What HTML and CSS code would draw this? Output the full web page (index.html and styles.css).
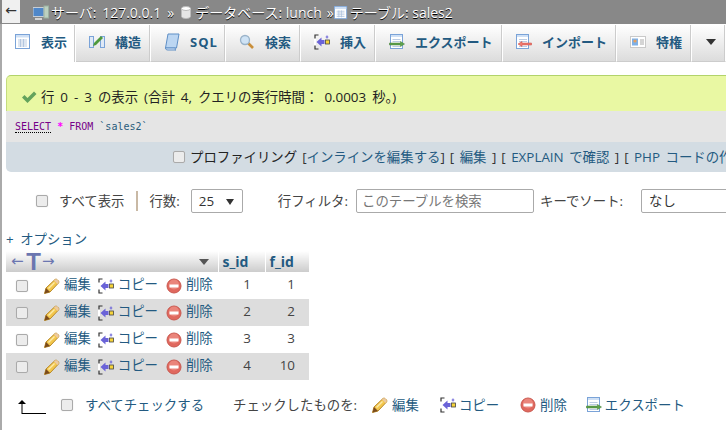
FILE: index.html
```html
<!DOCTYPE html>
<html lang="ja">
<head>
<meta charset="utf-8">
<title>sales2</title>
<link rel="stylesheet" href="styles.css">
</head>
<body>
<svg class="defs" width="0" height="0" aria-hidden="true">
  <symbol id="i-pencil" viewBox="0 0 16 16">
    <path d="M11 1.500a1.500 1.500 0 0 1 2 0l1.500 1.500a1.500 1.500 0 0 1 0 2L6 14l-5.500 1.500L2 10z" fill="#f3c74c" stroke="#b98a2a" stroke-width="1"/>
    <path d="M11 1.500a1.500 1.500 0 0 1 2 0l1.500 1.500a1.500 1.500 0 0 1 0 2l-1 1-3.500-3.500z" fill="#ecc9a0"/>
    <path d="M2 10l4 4-5.500 1.500z" fill="#7a4a1c"/>
    <path d="M4.500 10.500L10.500 4.500" stroke="#fbeaa8" stroke-width="1.400"/>
  </symbol>
  <symbol id="i-copy" viewBox="0 0 16 16">
    <path d="M4.500 1H1v14h3.500" fill="none" stroke="#333" stroke-width="1.200"/>
    <path d="M1 4.500v7" stroke="#fff" stroke-width="2"/>
    <path d="M2.500 8l5-4.500v2.500h3v4h-3v2.500z" fill="#6a63d8"/>
    <rect x="11.500" y="6" width="4" height="4" fill="#f5d33a" stroke="#444" stroke-width=".8"/>
    <path d="M13 1.500v3M11.700 3h2.600" stroke="#6a63d8" stroke-width="1"/>
  </symbol>
  <symbol id="i-del" viewBox="0 0 16 16">
    <circle cx="8" cy="8" r="7" fill="#e0685e" stroke="#c9584f"/>
    <circle cx="8" cy="6.500" r="5" fill="#f09a90" opacity=".6"/>
    <rect x="3.500" y="6.500" width="9" height="3" fill="#fff"/>
  </symbol>
  <symbol id="i-table" viewBox="0 0 16 16">
    <rect x=".5" y=".5" width="14" height="14" fill="#fff" stroke="#7aa3d8"/>
    <path d="M1 1h13v2.500H1z" fill="#cfe0f5"/>
    <path d="M3 6h9M3 8h9M3 10h9M3 12h9M5.500 5v8M8.500 5v8" stroke="#a9bfdc" stroke-width=".8"/>
  </symbol>
  <symbol id="i-export" viewBox="0 0 16 16">
    <rect x="1.500" y=".5" width="12" height="14" fill="#fff" stroke="#7aa3d8"/>
    <path d="M2 1h11v2H2z" fill="#cfe0f5"/>
    <path d="M3.500 5.500h8M3.500 7.500h8M3.500 12.500h8" stroke="#a9bfdc" stroke-width=".8"/>
    <path d="M.5 9h11V7.500l4 2.500-4 2.500V11H.5z" fill="#5fa34c" stroke="#3e7a30" stroke-width=".5"/>
  </symbol>
  <symbol id="i-import" viewBox="0 0 16 16">
    <rect x=".5" y=".5" width="12" height="14" fill="#fff" stroke="#7aa3d8"/>
    <path d="M1 1h11v2H1z" fill="#cfe0f5"/>
    <path d="M3 5.500h8M3 7.500h8M3 12.500h8" stroke="#a9bfdc" stroke-width=".8"/>
    <path d="M15.500 9H6V7.500L2 10l4 2.500V11h9.500z" fill="#ee7a70" stroke="#c9463c" stroke-width=".5"/>
  </symbol>
</svg>

<header class="topbar">
  <span class="back">←</span>
  <nav class="crumbs">
    <svg class="crumb-icon" width="16" height="16" viewBox="0 0 16 16"><rect x="3" y="9" width="3" height="3" fill="#ccc"/><rect x="0" y="2.500" width="11" height="9" fill="#4f87c9" stroke="#c8ced6"/><rect x="2" y="13" width="7" height="2" fill="#d4d4d4"/><rect x="11" y="1" width="4.500" height="12" fill="#bcd0c0" stroke="#9ab0a0"/></svg>
    <span class="crumb c-server">サーバ: 127.0.0.1</span>
    <span class="sep">»</span>
    <svg class="crumb-icon db" width="10" height="13" viewBox="0 0 10 13"><path d="M.5 2.500v8c0 1 2 2 4.500 2s4.500-1 4.500-2v-8z" fill="#e6e6e6" stroke="#bbb"/><ellipse cx="5" cy="2.500" rx="4.500" ry="2" fill="#fff" stroke="#bbb"/></svg>
    <span class="crumb">データベース: lunch</span>
    <span class="sep s2">»</span>
    <svg class="crumb-icon" width="14" height="14"><use href="#i-table"/></svg>
    <span class="crumb">テーブル: sales2</span>
  </nav>
</header>

<div class="shell">
  <nav class="tabs">
    <a class="tab active t1"><svg class="tab-icon" width="16" height="16"><use href="#i-table"/></svg>表示</a>
    <a class="tab t2"><svg class="tab-icon" width="16" height="16" viewBox="0 0 16 16"><rect x=".5" y="2.500" width="4" height="11" fill="#dfe9f6" stroke="#7aa3d8"/><rect x="11.500" y="2.500" width="4" height="11" fill="#dfe9f6" stroke="#7aa3d8"/><path d="M4 12l3-1 7-7-2-2-7 7z" fill="#4f9a3c"/></svg>構造</a>
    <a class="tab t3"><svg class="tab-icon" width="16" height="18" viewBox="0 0 16 18"><path d="M4 1h11l-2.500 14H1.500z" fill="#bcd6f2" stroke="#5f8fc6"/><path d="M1.500 15c0 1.500 1 2 2.500 2h8c-1 0-1-1-.5-2z" fill="#dfeafa" stroke="#5f8fc6"/></svg><span class="sql-label">SQL</span></a>
    <a class="tab t4"><svg class="tab-icon" width="16" height="16" viewBox="0 0 16 16"><path d="M9 9l5 5" stroke="#c98f3a" stroke-width="2.600"/><circle cx="6" cy="6" r="4.500" fill="#cfe3f5" stroke="#9ab3c9" stroke-width="1.300"/></svg>検索</a>
    <a class="tab t5"><svg class="tab-icon" width="16" height="16"><use href="#i-copy"/></svg>挿入</a>
    <a class="tab t6"><svg class="tab-icon" width="16" height="16"><use href="#i-export"/></svg>エクスポート</a>
    <a class="tab t7"><svg class="tab-icon" width="16" height="16"><use href="#i-import"/></svg>インポート</a>
    <a class="tab t8"><svg class="tab-icon" width="16" height="16" viewBox="0 0 16 16"><rect x=".5" y="2.500" width="15" height="11" fill="#fff" stroke="#c9c9c9"/><rect x="2" y="4.500" width="6" height="7" fill="#7fb0e6"/><circle cx="5" cy="7" r="1.600" fill="#e8a05c"/><path d="M10 6h4M10 8h4M10 10h4" stroke="#aaa"/></svg>特権</a>
    <a class="tab more"><span class="more-arrow"></span></a>
  </nav>

  <main class="content">
    <section class="result">
      <div class="msg"><svg class="check" width="16" height="14" viewBox="0 0 16 14"><path d="M1 7.500l2.500-2.500 3 3L13 1.500 15.500 4l-9 9z" fill="#63a35c"/></svg>行 0 - 3 の表示 (合計 4, クエリの実行時間： 0.0003 秒。)</div>
      <div class="sql"><code><span class="kw dotted">SELECT</span> <span class="star">*</span> <span class="kw">FROM</span> <span class="str">`sales2`</span></code></div>
      <div class="profile">
        <span class="cb"></span><span class="profile-label">プロファイリング</span>
        <span class="bracket">[<a>インラインを編集する</a>]</span>
        <span class="bracket">[ <a>編集</a> ]</span>
        <span class="bracket">[ <a>EXPLAIN で確認</a> ]</span>
        <span class="bracket">[ <a>PHP コードの作成</a> ]</span>
      </div>
    </section>

    <div class="controls">
      <span class="cb"></span>
      <span class="muted all">すべて表示</span>
      <span class="vbar"></span>
      <span class="muted rows-label">行数:</span>
      <span class="select rows">25<i class="tri"></i></span>
      <span class="muted filter-label">行フィルタ:</span>
      <span class="input">このテーブルを検索</span>
      <span class="muted sort-label">キーでソート:</span>
      <span class="select sort">なし</span>
    </div>

    <a class="options">+ オプション</a>

    <table class="grid">
      <thead>
        <tr>
          <th class="h-act"><div class="h-inner"><span class="resize"><i class="ar">←</i><b class="tee">T</b><i class="ar">→</i></span><span class="h-tri"></span></div></th>
          <th>s_id</th>
          <th>f_id</th>
        </tr>
      </thead>
      <tbody>
        <tr><td class="acts"><div class="act-row"><span class="cb"></span><a class="edit"><svg width="16" height="16"><use href="#i-pencil"/></svg>編集</a><a class="copy"><svg width="16" height="16"><use href="#i-copy"/></svg>コピー</a><a class="del"><svg width="16" height="16"><use href="#i-del"/></svg>削除</a></div></td><td class="num">1</td><td class="num">1</td></tr>
        <tr><td class="acts"><div class="act-row"><span class="cb"></span><a class="edit"><svg width="16" height="16"><use href="#i-pencil"/></svg>編集</a><a class="copy"><svg width="16" height="16"><use href="#i-copy"/></svg>コピー</a><a class="del"><svg width="16" height="16"><use href="#i-del"/></svg>削除</a></div></td><td class="num">2</td><td class="num">2</td></tr>
        <tr><td class="acts"><div class="act-row"><span class="cb"></span><a class="edit"><svg width="16" height="16"><use href="#i-pencil"/></svg>編集</a><a class="copy"><svg width="16" height="16"><use href="#i-copy"/></svg>コピー</a><a class="del"><svg width="16" height="16"><use href="#i-del"/></svg>削除</a></div></td><td class="num">3</td><td class="num">3</td></tr>
        <tr><td class="acts"><div class="act-row"><span class="cb"></span><a class="edit"><svg width="16" height="16"><use href="#i-pencil"/></svg>編集</a><a class="copy"><svg width="16" height="16"><use href="#i-copy"/></svg>コピー</a><a class="del"><svg width="16" height="16"><use href="#i-del"/></svg>削除</a></div></td><td class="num">4</td><td class="num">10</td></tr>
      </tbody>
    </table>

    <div class="bulk">
      <svg class="arrow" width="28" height="15" viewBox="0 0 28 15"><path d="M4 15V4M4 14.500h24" stroke="#000" fill="none"/><path d="M0 5l4-4 4 4z" fill="#000"/></svg>
      <span class="cb"></span>
      <a class="check-all">すべてチェックする</a>
      <span class="muted with">チェックしたものを:</span>
      <a class="b-edit"><svg width="16" height="16"><use href="#i-pencil"/></svg>編集</a>
      <a class="b-copy"><svg width="16" height="16"><use href="#i-copy"/></svg>コピー</a>
      <a class="b-del"><svg width="16" height="16"><use href="#i-del"/></svg>削除</a>
      <a class="b-exp"><svg width="16" height="16"><use href="#i-export"/></svg>エクスポート</a>
    </div>
  </main>
</div>
</body>
</html>
```

FILE: styles.css
```css
* { box-sizing: border-box; }
html, body { margin: 0; padding: 0; width: 726px; height: 430px; overflow: hidden; background: #fff; }
body { font: 13.400px/18px "Open Sans", "Noto Sans CJK JP", sans-serif; color: #444; }
.defs { position: absolute; }
a { color: #235a81; text-decoration: none; }

.topbar { display: flex; align-items: center; height: 24px; background: #888; padding-left: 2px; }
.back { width: 18px; height: 23px; background: #f0f0f0; color: #333; font: 14px/21px "DejaVu Sans", sans-serif; text-align: center; align-self: flex-start; }
.crumbs { display: flex; align-items: center; margin: 1px 0 0 13px; color: #fff; font-size: 14px; white-space: nowrap; text-shadow: 0 1px 0 #000; }
.crumb-icon { margin-right: 2px; flex: none; }
.crumb-icon.db { margin-right: 4px; }
.c-server { word-spacing: 2px; }
.sep { margin: 0 7px 0 6px; }
.sep.s2 { margin: 0 0 0 5px; }

.shell { border-left: 2px solid #aaa; height: 406px; }

.tabs { display: flex; height: 38px; border-top: 1px solid #fff; }
.tab { display: flex; align-items: center; height: 37px; padding: 0 0 3px 13px; font-weight: 700; font-size: 13px; color: #235a81; background: linear-gradient(#fff, #dcdcdc); border-right: 1px solid #fff; box-shadow: inset -1px 0 0 #ccc; border-bottom: 1px solid #ccc; white-space: nowrap; }
.tab.active { background: #fff; border-bottom: 0; }
.tab-icon { margin-right: 10px; flex: none; }
.sql-label { letter-spacing: 1px; }
.t1 { width: 74px; } .t2 { width: 75px; } .t3 { width: 75px; } .t4 { width: 75px; } .t5 { width: 75px; }
.t6 { width: 127px; } .t7 { width: 114px; } .t8 { width: 75px; }
.more { flex: 1; justify-content: flex-start; padding-left: 14px; }
.more-arrow { width: 0; height: 0; border-left: 5.500px solid transparent; border-right: 5.500px solid transparent; border-top: 6px solid #333; }

.content { padding: 13px 0 0 4px; width: 900px; }

.result { width: 900px; }
.msg { height: 36px; display: flex; align-items: center; padding: 7px 0 0 14px; background: #e9f8a3; border-top: 1px solid #b2d36a; border-left: 1px solid #c5dc7e; border-top-left-radius: 5px; color: #222; word-spacing: 2.500px; }
.check { margin-right: 4px; flex: none; }
.sql { height: 31px; background: #e5e5e5; padding: 5px 0 0 9px; }
.sql code { font: 10px/16px "DejaVu Sans Mono", "Liberation Mono", monospace; }
.kw { color: #770088; }
.dotted { border-bottom: 1px dotted #000; }
.star { color: #f0f; font-weight: 700; }
.str { color: #2a5c7c; }
.profile { height: 30px; display: flex; align-items: center; gap: 5px; padding: 0 0 0 167px; background: #d3dce3; border-bottom-left-radius: 5px; color: #222; white-space: nowrap; }
.bracket { color: #333; word-spacing: 2px; }

.cb { display: inline-block; width: 12px; height: 12px; flex: none; background: #ececec; border: 1px solid #aaa; border-radius: 2px; box-shadow: 0 0 1px #ccc; }

.controls { display: flex; align-items: center; height: 24px; margin-top: 17px; padding-left: 30px; white-space: nowrap; }
.muted { color: #444; }
.all { margin-left: 11px; }
.vbar { width: 2px; height: 20px; background: #c9b9a5; margin: 0 11px 0 12px; }
.select { position: relative; display: flex; align-items: center; height: 24px; background: #fff; border: 1px solid #aaa; border-radius: 2px; padding-left: 7px; color: #333; }
.rows { width: 52px; margin-left: 11px; }
.tri { position: absolute; right: 8px; top: 9px; width: 0; height: 0; border-left: 4px solid transparent; border-right: 4px solid transparent; border-top: 6px solid #333; }
.filter-label { margin-left: 35px; }
.input { width: 178px; height: 24px; margin-left: 8px; background: #fff; border: 1px solid #aaa; border-radius: 2px; padding: 2px 0 0 5px; color: #777; }
.sort-label { margin-left: 6px; }
.sort { width: 120px; margin-left: 18px; }

.options { display: block; margin-top: 17px; height: 21px; line-height: 18px; word-spacing: 3px; }

.grid { border-collapse: collapse; table-layout: fixed; width: 303px; }
.grid th { height: 21px; padding: 0 0 0 4px; background: linear-gradient(#fff, #ccc); color: #235a81; font-weight: 700; font-size: 14px; text-align: left; border-right: 1px solid #fff; }
.grid th:nth-child(1) { width: 212px; padding: 0; }
.grid th:nth-child(2) { width: 47px; }
.grid th:nth-child(3) { width: 44px; border-right: 0; }
.h-inner { display: flex; align-items: center; justify-content: space-between; height: 21px; padding: 0 0 0 5px; }
.resize { display: flex; align-items: center; color: #6b76b0; }
.ar { font: normal 15px/1 "DejaVu Sans", sans-serif; width: 14px; }
.tee { font: 700 24px/21px "Liberation Sans", sans-serif; color: #6b76b0; width: 17px; text-align: center; }
.h-tri { width: 0; height: 0; margin-right: 9px; border-left: 5.500px solid transparent; border-right: 5.500px solid transparent; border-top: 6px solid #555; }
.grid td { height: 27px; padding: 0; }
.grid tbody tr:nth-child(even) td { background: #ddd; }
.grid td.num { text-align: right; padding: 0 14px 3px 0; color: #444; }
.act-row { display: flex; align-items: center; padding-left: 10px; white-space: nowrap; }
.act-row a, .bulk a { display: flex; align-items: center; }
.act-row a { padding-bottom: 4px; }
.act-row svg { margin-top: 4px; }
.act-row svg, .b-edit svg, .b-del svg { margin-right: 4px; }
.b-copy svg, .b-exp svg { margin-right: 3px; }
.edit { margin-left: 16px; }
.copy { margin-left: 7px; }
.del { margin-left: 8px; }

.bulk { display: flex; align-items: center; height: 24px; margin-top: 13px; padding-left: 12px; white-space: nowrap; }
.arrow { flex: none; margin-top: 2px; }
.bulk .cb { margin-left: 15px; }
.check-all { margin-left: 12px; }
.with { margin-left: 29px; }
.b-edit { margin-left: 15px; }
.b-copy { margin-left: 21px; }
.b-del { margin-left: 21px; }
.b-exp { margin-left: 19px; }
```
